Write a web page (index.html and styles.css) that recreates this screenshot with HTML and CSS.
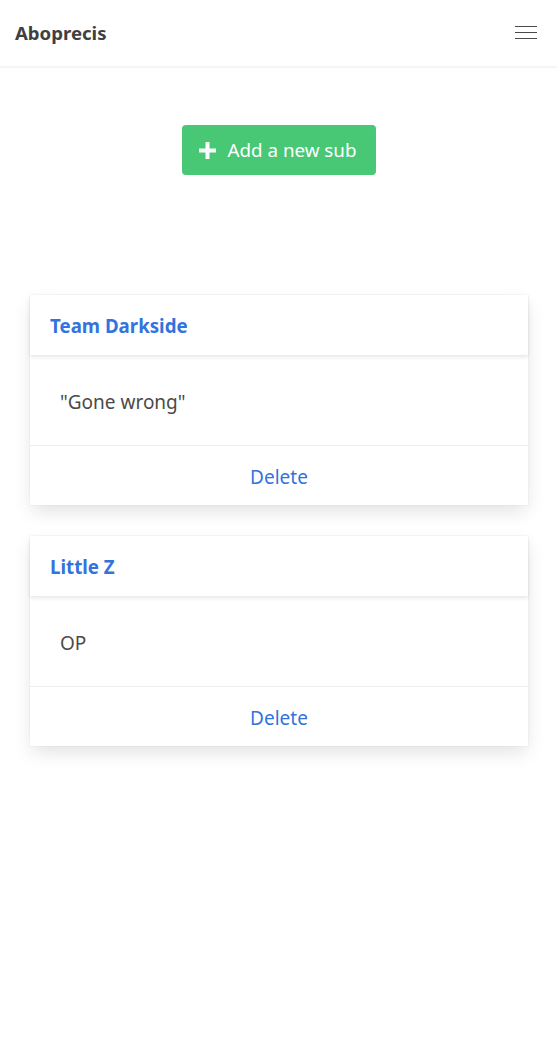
FILE: index.html
```html
<!DOCTYPE html>
<html>
<head>
<meta charset="utf-8">
<link rel="stylesheet" href="styles.css">
</head>
<body>
<nav class="navbar">
  <span class="brand">Aboprecis</span>
  <span class="burger"><span></span><span></span><span></span></span>
</nav>
<main class="main">
  <div class="actions">
    <button class="btn-add"><span class="plus">
      <svg width="17" height="17" viewBox="0 0 17 17"><path d="M8.5 0v17M0 8.5h17" stroke="#fff" stroke-width="4"/></svg>
    </span>Add a new sub</button>
  </div>
  <div class="cards">
    <div class="card">
      <div class="card-header">Team Darkside</div>
      <div class="card-content">"Gone wrong"</div>
      <div class="card-footer"><a class="delete">Delete</a></div>
    </div>
    <div class="card">
      <div class="card-header">Little Z</div>
      <div class="card-content">OP</div>
      <div class="card-footer"><a class="delete">Delete</a></div>
    </div>
  </div>
</main>
</body>
</html>
```
FILE: styles.css
```css
* { box-sizing: border-box; }
body {
  margin: 0;
  font-family: "Noto Sans", "Open Sans", sans-serif;
  color: #4a4a4a;
  background: #fff;
}
.navbar {
  height: 66px;
  display: flex;
  align-items: center;
  justify-content: space-between;
  padding: 0 20px 1px 15px;
  box-shadow: 0 2px 0 0 #f5f5f5;
}
.brand {
  font-weight: 700;
  font-size: 18.6px;
  color: #404040;
}
.burger {
  width: 22px;
  display: flex;
  flex-direction: column;
  gap: 5px;
}
.burger span {
  height: 1px;
  background: #4a4a4a;
  display: block;
}
.main {
  padding: 59px 29px 60px 30px;
}
.actions {
  display: flex;
  justify-content: center;
}
.btn-add {
  height: 50px;
  width: 194px;
  border: none;
  border-radius: 4px;
  background: #48c774;
  color: #fff;
  font-family: inherit;
  font-size: 18.8px;
  display: flex;
  align-items: center;
  justify-content: center;
  gap: 11px;
  padding: 0 2px 0 0;
}
.plus { display: flex; }
.cards {
  margin-top: 120px;
  display: flex;
  flex-direction: column;
  gap: 31px;
}
.card {
  background: #fff;
  box-shadow: 0 8px 18px -2px rgba(10,10,10,0.12), 0 0 0 1px rgba(10,10,10,0.02);
}
.card-header {
  height: 60px;
  display: flex;
  align-items: center;
  padding: 0 20px;
  font-weight: 700;
  font-size: 18.7px;
  color: #3273dc;
  box-shadow: 0 2px 4px rgba(10,10,10,0.1);
}
.card-content {
  height: 90px;
  padding: 3px 30px 0;
  display: flex;
  align-items: center;
  font-size: 19px;
}
.card-footer {
  height: 60px;
  border-top: 1px solid #ededed;
  padding-top: 2px;
  display: flex;
  align-items: center;
  justify-content: center;
}
.delete {
  color: #3273dc;
  font-size: 19px;
}
```
